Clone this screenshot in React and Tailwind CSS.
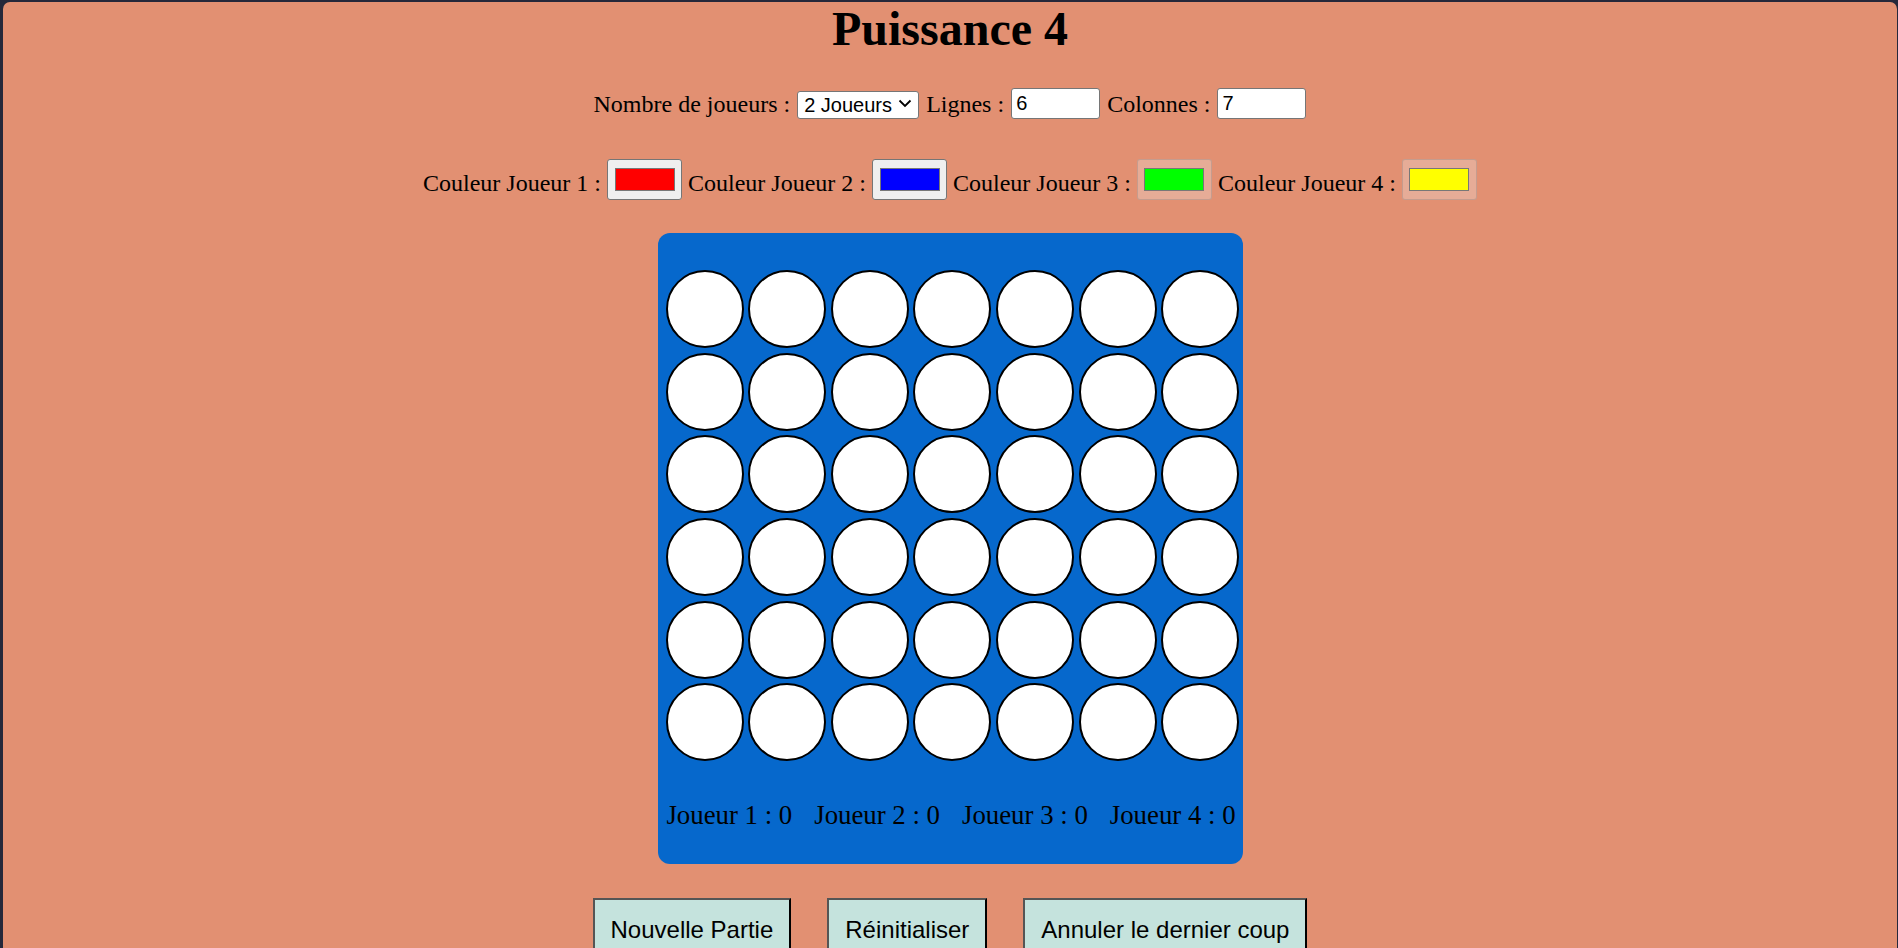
import React, { useState } from "react";

const PLAYER_COLORS = ["#ff0000", "#0000ff", "#00ff00", "#ffff00"];

const ColorPicker = ({ color, disabled }) => (
  <button
    type="button"
    disabled={disabled}
    className={`flex h-[41px] w-[75px] items-center justify-center rounded-[3px] border ${
      disabled
        ? "border-[rgba(118,118,118,0.3)] bg-[rgba(239,239,239,0.3)]"
        : "border-[#767676] bg-[#efefef]"
    }`}
  >
    <span
      className="block h-[23px] w-[60px] border border-[#777777]"
      style={{ backgroundColor: color }}
    />
  </button>
);

const App = () => {
  const [players, setPlayers] = useState("2");
  const [rows, setRows] = useState("6");
  const [cols, setCols] = useState("7");
  const [scores] = useState([0, 0, 0, 0]);

  const nbRows = parseInt(rows) || 6;
  const nbCols = parseInt(cols) || 7;
  const grid = Array.from({ length: nbRows }, () => Array(nbCols).fill(null));

  return (
    <div className="h-[948px] overflow-hidden bg-[#25283a] pl-[3px] pr-[1px] pt-[2px]">
      <div className="h-full rounded-t-[7px] bg-[#e29072] font-['Liberation_Serif',serif] text-black">
        <h1 className="text-center text-[48px] font-bold leading-[53px]">Puissance 4</h1>

        {/* reglages */}
        <div className="mt-[33px] flex h-[31px] items-center justify-center gap-[7px] text-[24px]">
          <span>Nombre de joueurs :</span>
          <span className="relative">
            <select
              value={players}
              onChange={(e) => setPlayers(e.target.value)}
              className="h-[28px] w-[122px] appearance-none rounded-[3px] border border-[#767676] bg-white pl-[6px] font-['Liberation_Sans',sans-serif] text-[20px] leading-[26px]"
            >
              <option value="2">2 Joueurs</option>
              <option value="3">3 Joueurs</option>
              <option value="4">4 Joueurs</option>
            </select>
            <svg
              className="pointer-events-none absolute right-[7px] top-[13px]"
              width="14"
              height="9"
              viewBox="0 0 14 9"
            >
              <path d="M1.5 1.5 L7 7 L12.5 1.5" fill="none" stroke="#000" strokeWidth="1.8" />
            </svg>
          </span>
          <span>Lignes :</span>
          <input
            type="text"
            value={rows}
            onChange={(e) => setRows(e.target.value)}
            className="h-[31px] w-[89px] rounded-[3px] border border-[#767676] bg-white px-[4px] font-['Liberation_Sans',sans-serif] text-[20px]"
          />
          <span>Colonnes :</span>
          <input
            type="text"
            value={cols}
            onChange={(e) => setCols(e.target.value)}
            className="h-[31px] w-[89px] rounded-[3px] border border-[#767676] bg-white px-[4px] font-['Liberation_Sans',sans-serif] text-[20px]"
          />
        </div>

        {/* couleurs */}
        <div className="mt-[40px] flex h-[41px] items-center justify-center gap-[6px] text-[24px]">
          {PLAYER_COLORS.map((c, i) => (
            <React.Fragment key={i}>
              <span className="pt-[6px]">Couleur Joueur {i + 1} :</span>
              <ColorPicker color={c} disabled={i + 1 > parseInt(players)} />
            </React.Fragment>
          ))}
        </div>

        {/* plateau */}
        <div className="mx-auto mt-[33px] h-[631px] w-[585px] rounded-[12px] bg-[#0668cc] pt-[37px]">
          <div className="flex flex-col gap-y-[4.67px] pl-[8px]">
            {grid.map((row, r) => (
              <div key={r} className="flex gap-x-[4.67px]">
                {row.map((cell, c) => (
                  <div
                    key={c}
                    className="h-[78px] w-[78px] rounded-full border-2 border-black bg-white"
                  />
                ))}
              </div>
            ))}
          </div>
          <div className="mt-[40px] flex justify-center gap-[22px] whitespace-nowrap pl-[2px] text-[26.8px] leading-[29.5px]">
            {scores.map((s, i) => (
              <span key={i} className="shrink-0">
                Joueur {i + 1} : {s}
              </span>
            ))}
          </div>
        </div>

        {/* actions */}
        <div className="mt-[34px] flex justify-center gap-[36px] font-['Liberation_Sans',sans-serif] text-[24px]">
          <button className="border-2 border-[#555555] border-r-black bg-[#c5e3dd] px-[16px] pb-[15px] pt-[16px] leading-[27px]">
            Nouvelle Partie
          </button>
          <button className="border-2 border-[#555555] border-r-black bg-[#c5e3dd] px-[16px] pb-[15px] pt-[16px] leading-[27px]">
            Réinitialiser
          </button>
          <button className="border-2 border-[#555555] border-r-black bg-[#c5e3dd] px-[16px] pb-[15px] pt-[16px] leading-[27px]">
            Annuler le dernier coup
          </button>
        </div>
      </div>
    </div>
  );
};

export default App;
